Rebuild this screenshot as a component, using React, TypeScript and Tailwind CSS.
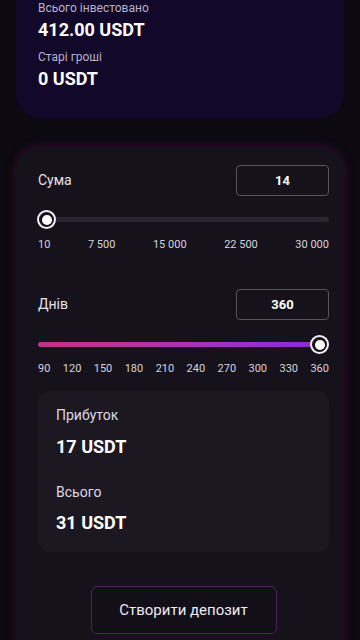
import type { ReactNode } from 'react';

const font = { fontFamily: 'Roboto, "Noto Sans", sans-serif' };

function Thumb() {
  return (
    <div className="w-[19px] h-[19px] rounded-full border-2 border-[#f4eefa] bg-[#15121b] flex items-center justify-center">
      <div className="w-[10px] h-[10px] rounded-full bg-white" />
    </div>
  );
}

function Field({ label, value }: { label: string; value: string }) {
  return (
    <div className="flex items-center justify-between">
      <span className="text-[14px] text-[#e4e0ea]">{label}</span>
      <div className="w-[93px] h-[31px] rounded-[4px] border border-[#58535f] flex items-center justify-center text-[13px] font-bold text-white">
        {value}
      </div>
    </div>
  );
}

function Ticks({ items }: { items: string[] }) {
  return (
    <div className="flex justify-between text-[11px] leading-[14px] text-[#d6d2dc]">
      {items.map((t) => (
        <span key={t}>{t}</span>
      ))}
    </div>
  );
}

function Stat({ label, children }: { label: string; children: ReactNode }) {
  return (
    <div>
      <div className="text-[12px] leading-[16px] text-[#b9b2c8]">{label}</div>
      <div className="mt-[3px] text-[18px] leading-[22px] font-bold text-white">{children}</div>
    </div>
  );
}

export default function App() {
  return (
    <div style={font} className="w-[360px] h-[640px] overflow-hidden bg-[#0c0910]">
      {/* Summary card */}
      <div className="mx-4 -mt-6 pt-6 pb-[28px] pl-[22px] pr-[15px] rounded-3xl bg-[#12082a] flex flex-col gap-[8px]">
        <Stat label="Всього інвестовано">412.00 USDT</Stat>
        <Stat label="Старі гроші">0 USDT</Stat>
      </div>

      {/* Calculator card */}
      <div className="mx-4 mt-[29px] pl-[22px] pr-[15px] pt-[18px] pb-10 rounded-3xl bg-[#15121b] shadow-[0_0_8px_1px_rgba(90,10,85,0.5)]">
        <Field label="Сума" value="14" />

        <div className="relative mt-[14px] h-[19px] flex items-center">
          <div className="w-full h-[5px] rounded-full bg-[#2a2631]" />
          <div className="absolute left-[-1px] top-0">
            <Thumb />
          </div>
        </div>
        <div className="mt-[9px]">
          <Ticks items={['10', '7 500', '15 000', '22 500', '30 000']} />
        </div>

        <div className="mt-[37px]">
          <Field label="Днів" value="360" />
        </div>

        <div className="relative mt-[15px] h-[19px] flex items-center">
          <div className="w-full h-[5px] rounded-full bg-gradient-to-r from-[#c42f86] to-[#8a26d9]" />
          <div className="absolute right-0 top-0">
            <Thumb />
          </div>
        </div>
        <div className="mt-[8px]">
          <Ticks items={['90', '120', '150', '180', '210', '240', '270', '300', '330', '360']} />
        </div>

        <div className="mt-[15px] rounded-xl bg-[#1b1822] px-[18px] pt-[14px] pb-[17px]">
          <div className="text-[14px] leading-[20px] text-[#ddd8e4]">Прибуток</div>
          <div className="mt-[10px] text-[18px] leading-[24px] font-bold text-white">17 USDT</div>
          <div className="mt-[23px] text-[14px] leading-[20px] text-[#ddd8e4]">Всього</div>
          <div className="mt-[9px] text-[18px] leading-[24px] font-bold text-white">31 USDT</div>
        </div>

        <div className="mt-[34px] flex justify-center">
          <button className="w-[186px] h-[48px] rounded-[6px] border border-[#53205f] bg-[#130f18] text-[15px] text-[#eeeaf2]">
            Створити депозит
          </button>
        </div>
      </div>
    </div>
  );
}
